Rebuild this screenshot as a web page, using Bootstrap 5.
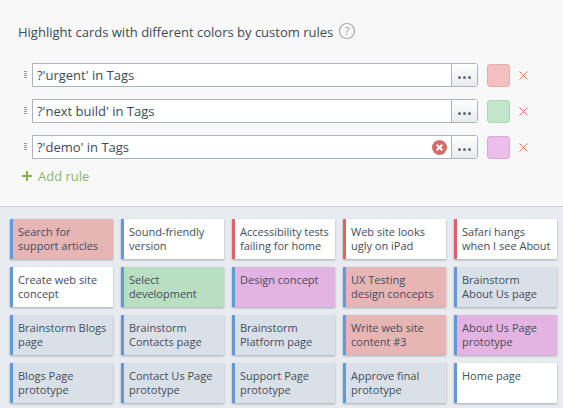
<!doctype html>
<html lang="en">
<head>
<meta charset="utf-8">
<title>Highlight rules</title>
<link href="https://cdn.jsdelivr.net/npm/bootstrap@5.3.0/dist/css/bootstrap.min.css" rel="stylesheet">
<style>
html, body { height: 408px; overflow: hidden; }
body { font-family: "Open Sans", sans-serif; background: #e8ebef; color: #3f4a5a; }
.rules-panel { height: 207px; background: #f8f8f8; border-bottom: 1px solid #cdd1d6; padding: 22px 0 0 18px; }
.rules-title { font-size: 13px; line-height: 20px; height: 41px; gap: 5px; }
.rule-row { height: 24px; margin-bottom: 12px; }
.grip { width: 14px; height: 24px; flex: none; }
.rule-box { width: 446px; height: 24px; flex: none; border: 1px solid #a9b4c2; border-radius: 0 3px 3px 0; background: #fff; }
.rule-text { font-size: 13px; line-height: 22px; padding-left: 4px; color: #3f4a5a; }
.rule-clear { margin-right: 4px; }
.rule-more { width: 26px; height: 22px; flex: none; border-left: 1px solid #a9b4c2; background: linear-gradient(#fff, #e9eaec); gap: 2px; padding-top: 4px; }
.rule-more i { width: 3px; height: 3px; border-radius: 50%; background: #5f6b7d; display: block; }
.swatch { width: 23px; height: 23px; flex: none; margin: 1px 0 0 9px; border-radius: 3px; border: 1px solid; }
.sw-red { background: #f4bfbf; border-color: #e3aeb0; }
.sw-green { background: #c3e6cb; border-color: #b0d6b9; }
.sw-purple { background: #ecbeea; border-color: #dba9d9; }
.rule-del { margin: 1px 0 0 9px; }
.add-rule { font-size: 13px; line-height: 18px; color: #8fb567; margin: -4px 0 0 4px; gap: 6px; }
.cards-board { display: grid; grid-template-columns: repeat(5, 103px); grid-auto-rows: 40px; column-gap: 8px; row-gap: 8px; padding: 12px 0 0 10px; }
.task { font-size: 11px; line-height: 14px; padding: 6px 2px 0 5px; border-left: 3px solid #629ad9; box-shadow: 0 1px 2px rgba(60,70,85,.4); background: #dae0e7; color: #434d5c; overflow: hidden; }
.task-white { background: #fff; }
.task-red { background: #e8b5b5; }
.task-green { background: #b9dfc2; }
.task-purple { background: #e3b3e2; }
.edge-red { border-left-color: #dc6464; }
</style>
</head>
<body>
<div class="rules-panel">
  <div class="rules-title d-flex">
    <span>Highlight cards with different colors by custom rules</span>
    <svg width="18" height="18" viewBox="0 0 18 18">
      <circle cx="9" cy="9" r="7.5" fill="none" stroke="#a8a8a8" stroke-width="1.2"/>
      <text x="9" y="13" font-size="11" text-anchor="middle" fill="#999" font-family="Open Sans">?</text>
    </svg>
  </div>

  <div class="rule-row d-flex align-items-center">
    <svg class="grip" viewBox="0 0 14 24"><path d="M6 8.5h3M6 10.5h3M6 12.5h3M6 14.5h3" stroke="#9a9a9a" stroke-width="1"/></svg>
    <div class="rule-box d-flex">
      <div class="rule-text flex-grow-1">?'urgent' in Tags</div>
      <div class="rule-more d-flex justify-content-center align-items-center"><i></i><i></i><i></i></div>
    </div>
    <div class="swatch sw-red"></div>
    <svg class="rule-del" width="9" height="9" viewBox="0 0 9 9"><path d="M.5 .5l8 8M8.5 .5l-8 8" stroke="#e57373" stroke-width="1"/></svg>
  </div>

  <div class="rule-row d-flex align-items-center">
    <svg class="grip" viewBox="0 0 14 24"><path d="M6 8.5h3M6 10.5h3M6 12.5h3M6 14.5h3" stroke="#9a9a9a" stroke-width="1"/></svg>
    <div class="rule-box d-flex">
      <div class="rule-text flex-grow-1">?'next build' in Tags</div>
      <div class="rule-more d-flex justify-content-center align-items-center"><i></i><i></i><i></i></div>
    </div>
    <div class="swatch sw-green"></div>
    <svg class="rule-del" width="9" height="9" viewBox="0 0 9 9"><path d="M.5 .5l8 8M8.5 .5l-8 8" stroke="#e57373" stroke-width="1"/></svg>
  </div>

  <div class="rule-row d-flex align-items-center">
    <svg class="grip" viewBox="0 0 14 24"><path d="M6 8.5h3M6 10.5h3M6 12.5h3M6 14.5h3" stroke="#9a9a9a" stroke-width="1"/></svg>
    <div class="rule-box d-flex align-items-center">
      <div class="rule-text flex-grow-1">?'demo' in Tags</div>
      <svg class="rule-clear" width="15" height="15" viewBox="0 0 15 15"><circle cx="7.5" cy="7.5" r="7.5" fill="#d66b6b"/><path d="M4.7 4.7l5.6 5.6M10.3 4.7l-5.6 5.6" stroke="#fff" stroke-width="2"/></svg>
      <div class="rule-more d-flex justify-content-center align-items-center"><i></i><i></i><i></i></div>
    </div>
    <div class="swatch sw-purple"></div>
    <svg class="rule-del" width="9" height="9" viewBox="0 0 9 9"><path d="M.5 .5l8 8M8.5 .5l-8 8" stroke="#e57373" stroke-width="1"/></svg>
  </div>

  <div class="add-rule d-flex align-items-center">
    <svg width="10" height="10" viewBox="0 0 10 10"><path d="M5 0v10M0 5h10" stroke="#8ab04f" stroke-width="2"/></svg>
    <span>Add rule</span>
  </div>
</div>

<div class="cards-board">
  <div class="task task-red">Search for<br>support articles</div>
  <div class="task task-white">Sound-friendly<br>version</div>
  <div class="task task-white edge-red">Accessibility tests<br>failing for home</div>
  <div class="task task-white edge-red">Web site looks<br>ugly on iPad</div>
  <div class="task task-white edge-red">Safari hangs<br>when I see About</div>

  <div class="task task-white">Create web site<br>concept</div>
  <div class="task task-green">Select<br>development</div>
  <div class="task task-purple">Design concept</div>
  <div class="task task-red">UX Testing<br>design concepts</div>
  <div class="task">Brainstorm<br>About Us page</div>

  <div class="task">Brainstorm Blogs<br>page</div>
  <div class="task">Brainstorm<br>Contacts page</div>
  <div class="task">Brainstorm<br>Platform page</div>
  <div class="task task-red">Write web site<br>content #3</div>
  <div class="task task-purple">About Us Page<br>prototype</div>

  <div class="task">Blogs Page<br>prototype</div>
  <div class="task">Contact Us Page<br>prototype</div>
  <div class="task">Support Page<br>prototype</div>
  <div class="task">Approve final<br>prototype</div>
  <div class="task task-white">Home page</div>
</div>
<script src="https://cdn.jsdelivr.net/npm/bootstrap@5.3.0/dist/js/bootstrap.bundle.min.js"></script>
</body>
</html>
